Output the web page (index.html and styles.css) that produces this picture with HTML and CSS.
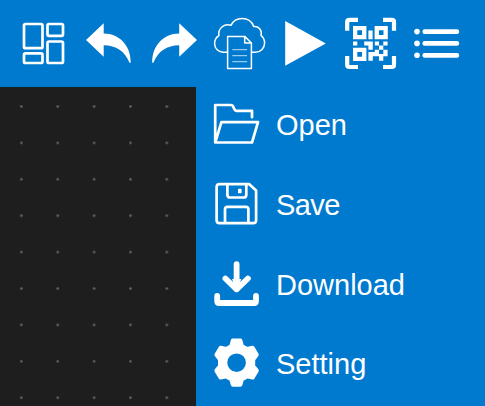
FILE: index.html
```html
<!DOCTYPE html>
<html lang="en">
<head>
<meta charset="utf-8">
<title>Editor</title>
<link rel="stylesheet" href="styles.css">
</head>
<body>
<div class="app">
  <header class="toolbar">
    <svg class="tool" viewBox="11 0 65 87"><g class="line"><rect x="24" y="24" width="18.5" height="24.2" rx="1.5"/><rect x="47.5" y="24" width="15.5" height="11.8" rx="1.5"/><rect x="47.5" y="41.5" width="15.5" height="21.5" rx="1.5"/><rect x="24" y="53.3" width="18.5" height="9.7" rx="1.5"/></g></svg>
    <svg class="tool" viewBox="76 0 65 87"><path class="solid" d="M86 40 103.7 23.3V33.6C120 33.8 130.8 46 130.7 62.8H129.5C125 51 116 45.3 103.7 45.2V56.7Z"/></svg>
    <svg class="tool" viewBox="141 0 65 87"><path class="solid" d="M197 40 179.2 23.3V33.6C163 33.8 152 46 152.2 62.8H153.4C158 51 167 45.3 179.2 45.2V56.7Z"/></svg>
    <svg class="tool" viewBox="206 0 65 87"><g class="thin"><path d="M227 52.3H223C218 52 214.6 48 214.6 43.7C214.6 40.3 216 37.5 218.9 35.7C217.8 28.5 224 23.3 231 25.3C233 21.3 237 18.6 242 18.6C247.5 18.6 252 21.7 253.7 26.6C258.5 26 262.3 30 261 35.3C263.5 37.3 264.6 40 264.6 43C264.6 48 260.8 52.3 255.5 52.3H252"/><path d="M227.6 36.4H244.7L251.4 43V68.4H227.6ZM244.7 36.4V43H251.4"/></g><path class="faint" d="M232.7 49.7H246.7M232.7 55.7H246.7M232.7 61.7H246.7"/></svg>
    <svg class="tool" viewBox="271 0 65 87"><path class="solid" d="M285.2 21 325.8 43.4 285.2 65.8Z"/></svg>
    <svg class="tool" viewBox="336 0 65 87"><path class="frame" d="M347.2 30.8V22Q347.2 19.9 349.4 19.9H358M383 19.9H391.8Q394 19.9 394 22V30.8M394 56V64.8Q394 67 391.8 67H383M358 67H349.4Q347.2 67 347.2 64.8V56"/><path class="solid" fill-rule="evenodd" d="M353 26H366.4V39.2H353ZM357.3 30.3V34.9H362V30.3ZM374.6 26H387.8V39.2H374.6ZM378.9 30.3V34.9H383.5V30.3ZM353 47.8H366.4V61H353ZM357.3 52.1V56.7H362V52.1Z"/><path class="solid" d="M368.4 30.5H372.6V39.2H368.4ZM353 41.4H357.3V45.5H353ZM364.2 41.4H372.8V49.7H368.4V45.5H364.2ZM374.8 41.4H379V45.5H374.8ZM383.3 41.4H387.6V45.5H383.3ZM379 45.5H383.3V49.8H379ZM374.8 49.8H379V56.3H372.8V60.8H368.4V52H374.8ZM383.3 49.8H387.6V56.3H383.3V60.8H379V54H383.3Z"/></svg>
    <svg class="tool" viewBox="401 0 65 87"><g class="solid"><circle cx="417" cy="31.6" r="2.8"/><circle cx="417" cy="43.4" r="2.8"/><circle cx="417" cy="55.3" r="2.8"/><rect x="422.4" y="29.3" width="36.8" height="4.7" rx="2.3"/><rect x="422.4" y="41.1" width="36.8" height="4.7" rx="2.3"/><rect x="422.4" y="53" width="36.8" height="4.7" rx="2.3"/></g></svg>
  </header>
  <main class="workspace">
    <svg class="canvas" viewBox="0 87 196 319">
      <defs><pattern id="dots" x="3.2" y="88.3" width="36.37" height="36.4" patternUnits="userSpaceOnUse"><circle class="dot" cx="18.2" cy="18.2" r="1.2"/></pattern></defs>
      <rect x="0" y="87" width="196" height="319" fill="url(#dots)"/>
    </svg>
    <nav class="menu">
      <a class="item"><svg class="icon" viewBox="196 87 80 76"><path class="line" d="M252 117.2V110.8H236.5Q235 110.8 234.4 109.3L233 106.3Q232.4 105 231 105H215.2V142.5H252L258 122.1H221.4L215.4 142"/></svg><span>Open</span></a>
      <a class="item item-tight"><svg class="icon" viewBox="196 167 80 76"><path class="line" d="M219.3 184.2H249.3L256.1 190.5V220.2Q256.1 223.1 253.2 223.1H219.5Q216.6 223.1 216.6 220.2V187.1Q216.6 184.2 219.5 184.2ZM227.4 184V194.7Q227.4 197.5 230 197.5H243.7Q246.3 197.5 246.3 194.7V184M225 223V209.3Q225 206.8 227.5 206.8H245.9Q248.4 206.8 248.4 209.3V223"/><rect class="solid" x="238" y="188.8" width="3.6" height="4.4" rx=".8"/></svg><span>Save</span></a>
      <a class="item"><svg class="icon" viewBox="196 247 80 76"><path class="bold" d="M236.6 264.2V287M225.4 278.5 236.6 289.3 247.9 278.5M217.2 296V301.2Q217.2 303 219 303H254.2Q256 303 256 301.2V296"/><path class="solid" d="M232 279H241.4L236.6 290Z"/></svg><span>Download</span></a>
      <a class="item"><svg class="icon" viewBox="196 327 80 74"><path class="gear" fill-rule="evenodd" d="M232.8 340.6H240.4L242 346.2L247 349L252.6 347.8L256.8 354.8L253.2 359.4V366L256.8 370.6L252.6 377.6L247 376.4L242 379.2L240.4 384.8H232.8L231.2 379.2L226.2 376.4L220.6 377.6L216.4 370.6L220 366V359.4L216.4 354.8L220.6 347.8L226.2 349L231.2 346.2ZM236.6 351.4A11.3 11.3 0 1 0 236.6 374A11.3 11.3 0 1 0 236.6 351.4Z"/></svg><span>Setting</span></a>
    </nav>
  </main>
</div>
</body>
</html>
```
FILE: styles.css
```css
body {
  margin: 0;
  background: #1e1e1e;
  font-family: "Liberation Sans", Arial, sans-serif;
}

.app {
  width: 485px;
  height: 406px;
  display: flex;
  flex-direction: column;
  overflow: hidden;
}

.toolbar {
  display: flex;
  flex: none;
  height: 87px;
  padding-left: 11px;
  background: #007acf;
}

.tool {
  flex: none;
  width: 65px;
  height: 87px;
}

.workspace {
  display: flex;
  height: 319px;
}

.canvas {
  flex: none;
  width: 196px;
  height: 319px;
  background: #1e1e1e;
}

.dot {
  fill: #6a6a6a;
}

.menu {
  flex: 1;
  display: flex;
  flex-direction: column;
  gap: 4px;
  background: #007acf;
}

.item {
  display: flex;
  flex: none;
  align-items: center;
  height: 76px;
  color: #fff;
  font-size: 29px;
  line-height: 34px;
}

.item-tight {
  letter-spacing: -.6px;
}

.item:last-child {
  height: 74px;
}

.icon {
  flex: none;
  width: 80px;
  height: 100%;
}

.solid {
  fill: #fff;
}

.line,
.thin,
.faint,
.frame,
.bold {
  fill: none;
  stroke: #fff;
  stroke-width: 2.7;
  stroke-linejoin: round;
  stroke-linecap: round;
}

.thin {
  stroke-width: 1.5;
}

.faint {
  stroke-width: 1;
  opacity: .75;
}

.frame {
  stroke-width: 4.2;
  stroke-linecap: butt;
}

.bold {
  stroke-width: 5.8;
}

.gear {
  fill: #fff;
  stroke: #fff;
  stroke-width: 4;
  stroke-linejoin: round;
}
```
